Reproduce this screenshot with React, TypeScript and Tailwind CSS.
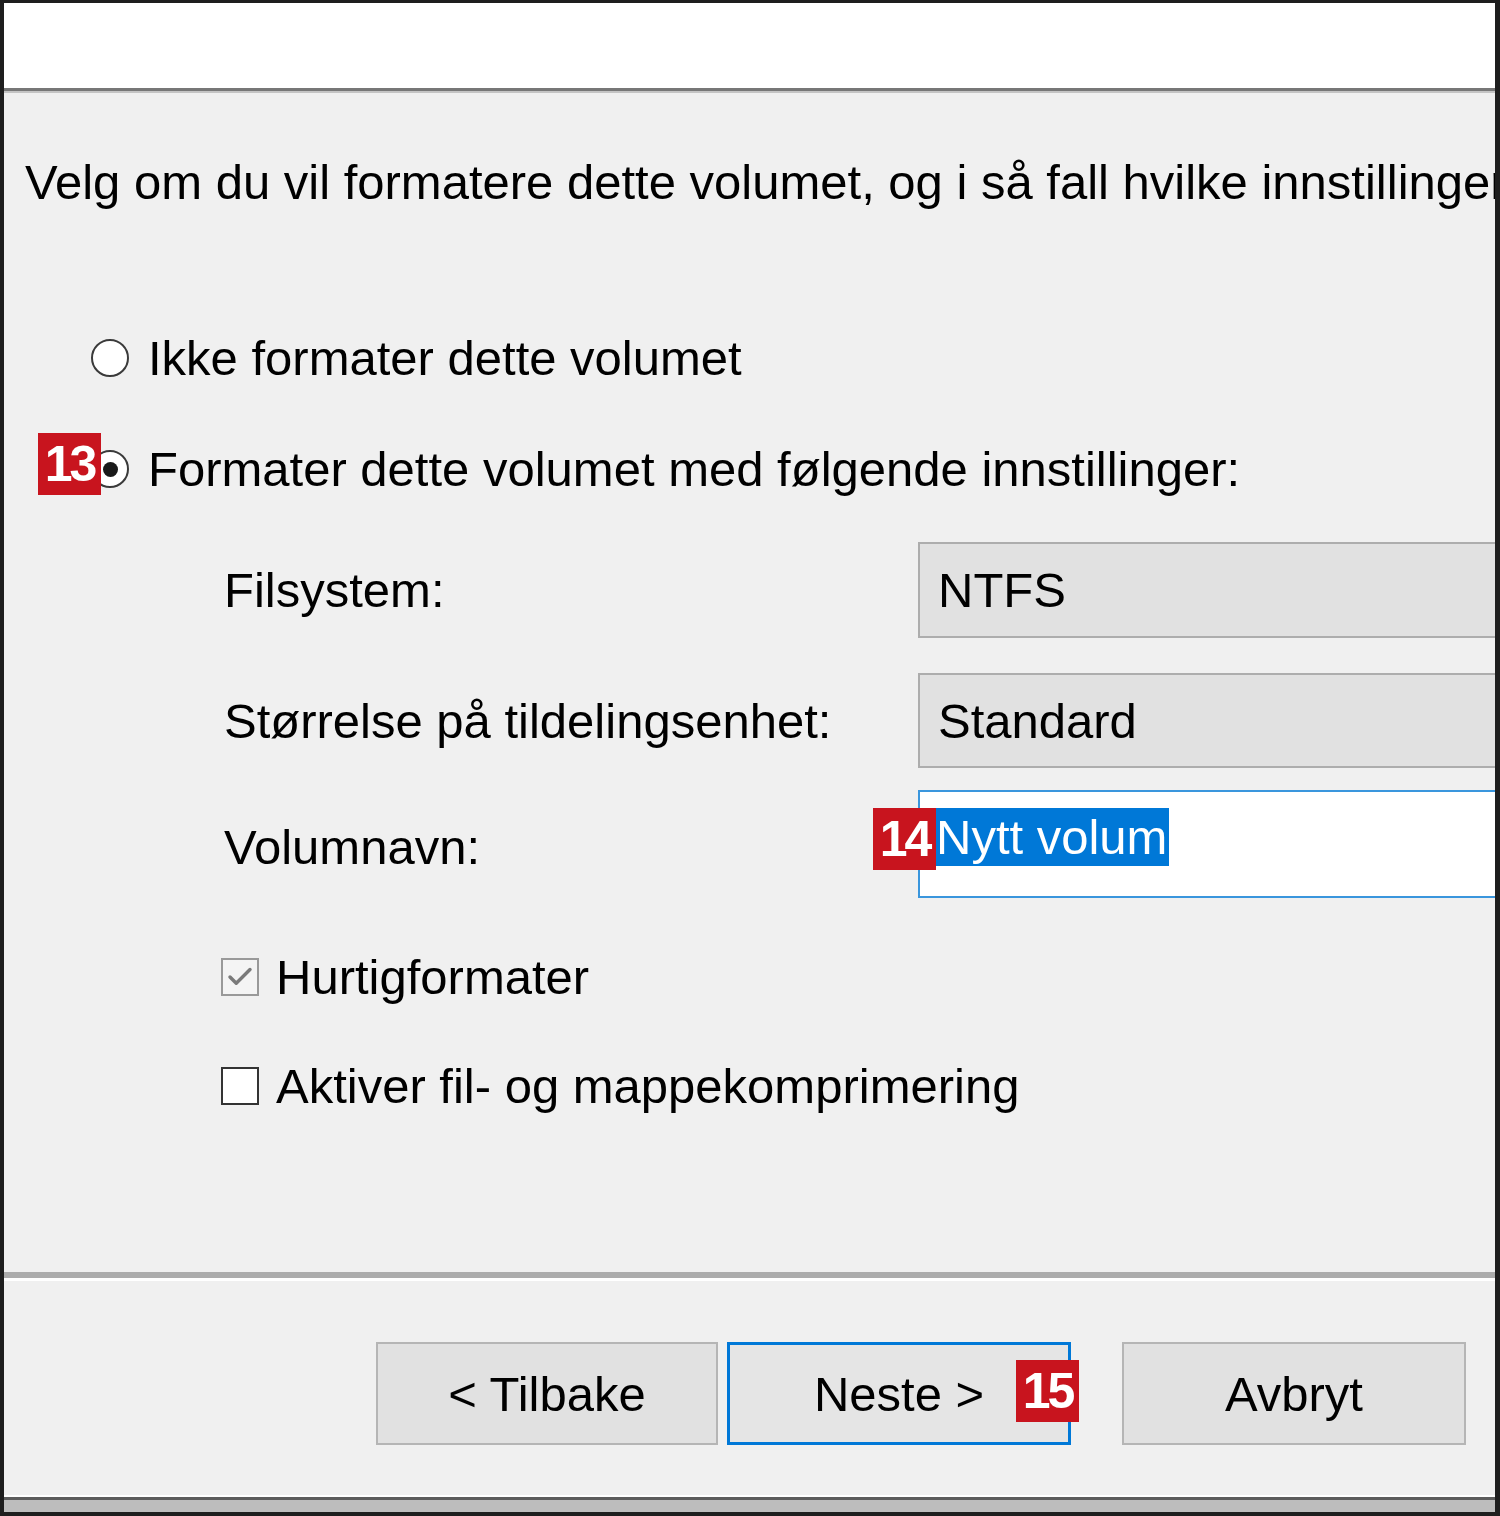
import { Check } from "lucide-react";

function Badge({ n, className }: { n: string; className: string }) {
  return (
    <span
      className={`absolute flex h-[62px] w-[63px] items-center justify-center bg-[#c8141e] text-[50px] font-bold leading-none tracking-[-3px] text-white ${className}`}
    >
      {n}
    </span>
  );
}

function Radio({ checked }: { checked?: boolean }) {
  return (
    <span className="flex h-[38px] w-[38px] shrink-0 items-center justify-center rounded-full border-2 border-[#3a3a3a] bg-white">
      {checked && <span className="h-[15px] w-[15px] rounded-full bg-[#1a1a1a]" />}
    </span>
  );
}

function CheckBox({ checked }: { checked?: boolean }) {
  return (
    <span
      className={`flex h-[38px] w-[38px] shrink-0 items-center justify-center border-2 ${
        checked ? "border-[#999] bg-[#f4f4f4]" : "border-[#333] bg-white"
      }`}
    >
      {checked && <Check className="h-[30px] w-[30px] text-[#7a7a7a]" strokeWidth={2.75} />}
    </span>
  );
}

export default function App() {
  return (
    <div className="flex h-[1516px] w-[1500px] flex-col bg-[#1e1e1e] pb-[4px] pl-[4px] pr-[5px] pt-[3px] font-['Liberation_Sans',Arial,sans-serif] text-[49px] leading-[58px] text-black">
      <div className="flex flex-1 flex-col overflow-hidden">
        {/* Header */}
        <div className="h-[85px] shrink-0 bg-white" />
        <div className="h-[3px] shrink-0 bg-[#777]" />
        <div className="h-[2px] shrink-0 bg-[#c4c4c4]" />

        {/* Body */}
        <div className="flex flex-1 flex-col bg-[#f0f0f0]">
          <div className="mt-[60px] flex h-[58px] items-center whitespace-nowrap pl-[21px]">
            Velg om du vil formatere dette volumet, og i så fall hvilke innstillinger
          </div>

          <div className="mt-[118px] flex h-[58px] items-center gap-[19px] pl-[87px]">
            <Radio />
            <span>Ikke formater dette volumet</span>
          </div>

          <div className="relative mt-[53px] flex h-[58px] items-center gap-[19px] pl-[87px]">
            <Radio checked />
            <span>Formater dette volumet med følgende innstillinger:</span>
            <Badge n="13" className="left-[34px] top-[-7px]" />
          </div>

          {/* Settings */}
          <div className="mt-[44px] grid grid-cols-[694px_1fr] pl-[220px]">
            <div className="flex h-[96px] items-center">Filsystem:</div>
            <div className="flex h-[96px] items-center border-2 border-r-0 border-[#adadad] bg-[#e1e1e1] pl-[18px]">
              NTFS
            </div>

            <div className="mt-[35px] flex h-[95px] items-center">Størrelse på tildelingsenhet:</div>
            <div className="mt-[35px] flex h-[95px] items-center border-2 border-r-0 border-[#adadad] bg-[#e1e1e1] pl-[18px]">
              Standard
            </div>

            <div className="mt-[22px] flex h-[108px] items-end pb-[22px]">Volumnavn:</div>
            <div className="relative mt-[22px] h-[108px] border-2 border-r-0 border-[#3a96dd] bg-white pl-[16px] pt-[16px]">
              <span className="inline-block bg-[#0078d7] pr-[2px] text-white">Nytt volum</span>
              <Badge n="14" className="left-[-47px] top-[16px]" />
            </div>
          </div>

          <div className="mt-[50px] flex h-[58px] items-center gap-[17px] pl-[217px]">
            <CheckBox checked />
            <span>Hurtigformater</span>
          </div>
          <div className="mt-[51px] flex h-[58px] items-center gap-[17px] pl-[217px]">
            <CheckBox />
            <span>Aktiver fil- og mappekomprimering</span>
          </div>

          {/* Separator */}
          <div className="mt-[157px] h-[6px] bg-[#acacac]" />
          <div className="h-[3px] bg-white" />

          {/* Buttons */}
          <div className="mt-[61px] flex pl-[372px]">
            <button className="flex h-[103px] w-[342px] items-center justify-center border-2 border-[#b5b5b5] bg-[#e1e1e1]">
              &lt; Tilbake
            </button>
            <button className="relative ml-[9px] flex h-[103px] w-[344px] items-center justify-center border-[3px] border-[#0078d7] bg-[#e5e5e5]">
              Neste &gt;
              <Badge n="15" className="left-[286px] top-[15px]" />
            </button>
            <button className="ml-[51px] flex h-[103px] w-[344px] items-center justify-center border-2 border-[#b5b5b5] bg-[#e1e1e1]">
              Avbryt
            </button>
          </div>

          <div className="mt-auto h-[2px] bg-white" />
        </div>

        {/* Bottom frame */}
        <div className="h-[3px] shrink-0 bg-[#5c5c5c]" />
        <div className="h-[12px] shrink-0 bg-[#bdbdbd]" />
      </div>
    </div>
  );
}
